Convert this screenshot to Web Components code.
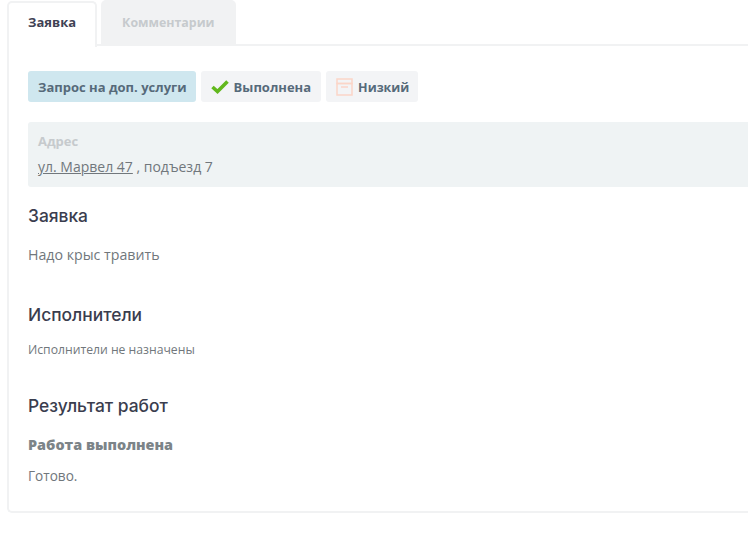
<!DOCTYPE html>
<html lang="ru">
<head>
<meta charset="utf-8">
<title>Заявка</title>
<style>
html, body { margin: 0; background: #fff; }
body { overflow: hidden; font-family: "Open Sans", "Noto Sans", sans-serif; color: #71777c; }
</style>
</head>
<body>
<ticket-card>
	<tab-bar slot="tabs">
		<tab-item active>Заявка</tab-item>
		<tab-item>Комментарии</tab-item>
	</tab-bar>
	<div style="display:flex;gap:5px;margin-bottom:20px">
		<status-tag kind="info">Запрос на доп. услуги</status-tag>
		<status-tag>
			<svg slot="icon" width="18" height="14" viewBox="0 0 18 14"><path d="M1.5 7 6.5 11.5 16.5 1.5" fill="none" stroke="#62b81d" stroke-width="3.6"/></svg>
			Выполнена
		</status-tag>
		<status-tag narrow>
			<svg slot="icon" width="17" height="18" viewBox="0 0 17 18"><g fill="none" stroke="#fbd5c8" stroke-width="1.5"><rect x="1" y="1" width="15" height="4.5"/><rect x="1" y="5.5" width="15" height="11.5"/><path d="M5 9h7"/></g></svg>
			<span style="padding-top:1px">Низкий</span>
		</status-tag>
	</div>
	<address-box label="Адрес"><u>ул. Марвел 47</u> , подъезд 7</address-box>
	<ticket-section heading="Заявка" gap="16" after="39"><span style="font-size:14.2px">Надо крыс травить</span></ticket-section>
	<ticket-section heading="Исполнители" gap="11" after="36"><span style="font-size:12.2px">Исполнители не назначены</span></ticket-section>
	<ticket-section heading="Результат работ" gap="18" after="0">
		<result-note title="Работа выполнена">Готово.</result-note>
	</ticket-section>
</ticket-card>

<script>
class TicketCard extends HTMLElement {
	constructor () {
		super();
		this.attachShadow({ mode: 'open' });
		this.shadowRoot.innerHTML = `
		<style>
		:host { display: block; margin-left: 7px; }
		.body {
			border: 2px solid #f1f2f3;
			border-top: 0;
			border-right: 0;
			border-radius: 0 0 0 5px;
			background: #fff;
			padding: 25px 0 26px 19px;
			height: 467px;
			box-sizing: border-box;
		}
		</style>
		<slot name="tabs"></slot>
		<div class="body"><slot></slot></div>`;
	}
}

class TabBar extends HTMLElement {
	constructor () {
		super();
		this.attachShadow({ mode: 'open' });
		this.shadowRoot.innerHTML = `
		<style>
		:host { display: flex; gap: 4px; height: 46px; border-bottom: 2px solid #f1f2f3; box-sizing: border-box; }
		</style>
		<slot></slot>`;
	}
}

class TabItem extends HTMLElement {
	constructor () {
		super();
		this.attachShadow({ mode: 'open' });
		this.shadowRoot.innerHTML = `
		<style>
		:host {
			display: flex; align-items: center; justify-content: center;
			box-sizing: border-box; height: 44px; padding: 0 21px;
			background: #f1f2f3; color: #c6cacd;
			font: 700 12.4px "Open Sans", sans-serif;
			border-radius: 5px 5px 0 0;
		}
		:host([active]) {
			height: 46px; margin-top: 1px; padding: 0 19px 6px;
			font-size: 13px;
			background: #fff; color: #3f4254;
			border: 2px solid #f1f2f3; border-bottom: 0;
		}
		</style>
		<slot></slot>`;
	}
}

class StatusTag extends HTMLElement {
	constructor () {
		super();
		this.attachShadow({ mode: 'open' });
		this.shadowRoot.innerHTML = `
		<style>
		:host {
			display: inline-flex; align-items: center; gap: 5px;
			height: 31px; padding: 0 10px;
			background: #f3f4f6; color: #566a7a;
			font: 700 13px "Open Sans", sans-serif;
			border-radius: 3px;
		}
		:host([kind="info"]) { background: #cfe7ef; padding-right: 9px; }
		:host([narrow]) { font-size: 12.5px; padding-right: 9px; }
		</style>
		<slot name="icon"></slot><slot></slot>`;
	}
}

class AddressBox extends HTMLElement {
	constructor () {
		super();
		this.attachShadow({ mode: 'open' });
		this.shadowRoot.innerHTML = `
		<style>
		:host {
			display: block; height: 65px; box-sizing: border-box;
			padding: 6px 10px; margin-bottom: 18px;
			background: #eff3f4; color: #71777c;
			border-radius: 3px 0 0 3px; font-size: 14px; line-height: 23px;
		}
		.label { color: #c6cacd; font-weight: 700; font-size: 13px; line-height: 27px; }
		</style>
		<div class="label">${this.getAttribute('label')}</div>
		<slot></slot>`;
	}
}

class TicketSection extends HTMLElement {
	constructor () {
		super();
		let gap   = this.getAttribute('gap');
		let after = this.getAttribute('after');
		this.attachShadow({ mode: 'open' });
		this.shadowRoot.innerHTML = `
		<style>
		:host { display: block; margin-bottom: ${after}px; }
		h3 { margin: 0 0 ${gap}px; font: 500 17.4px/22px Inter, sans-serif; color: #3a3d4e; }
		</style>
		<h3>${this.getAttribute('heading')}</h3>
		<slot></slot>`;
	}
}

class ResultNote extends HTMLElement {
	constructor () {
		super();
		this.attachShadow({ mode: 'open' });
		this.shadowRoot.innerHTML = `
		<style>
		:host { display: block; font-size: 13.6px; }
		.title { font-weight: 800; font-size: 14.4px; color: #7c8488; line-height: 20px; margin-bottom: 11px; }
		</style>
		<div class="title">${this.getAttribute('title')}</div>
		<slot></slot>`;
	}
}

customElements.define('ticket-card', TicketCard);
customElements.define('tab-bar', TabBar);
customElements.define('tab-item', TabItem);
customElements.define('status-tag', StatusTag);
customElements.define('address-box', AddressBox);
customElements.define('ticket-section', TicketSection);
customElements.define('result-note', ResultNote);
</script>
</body>
</html>
